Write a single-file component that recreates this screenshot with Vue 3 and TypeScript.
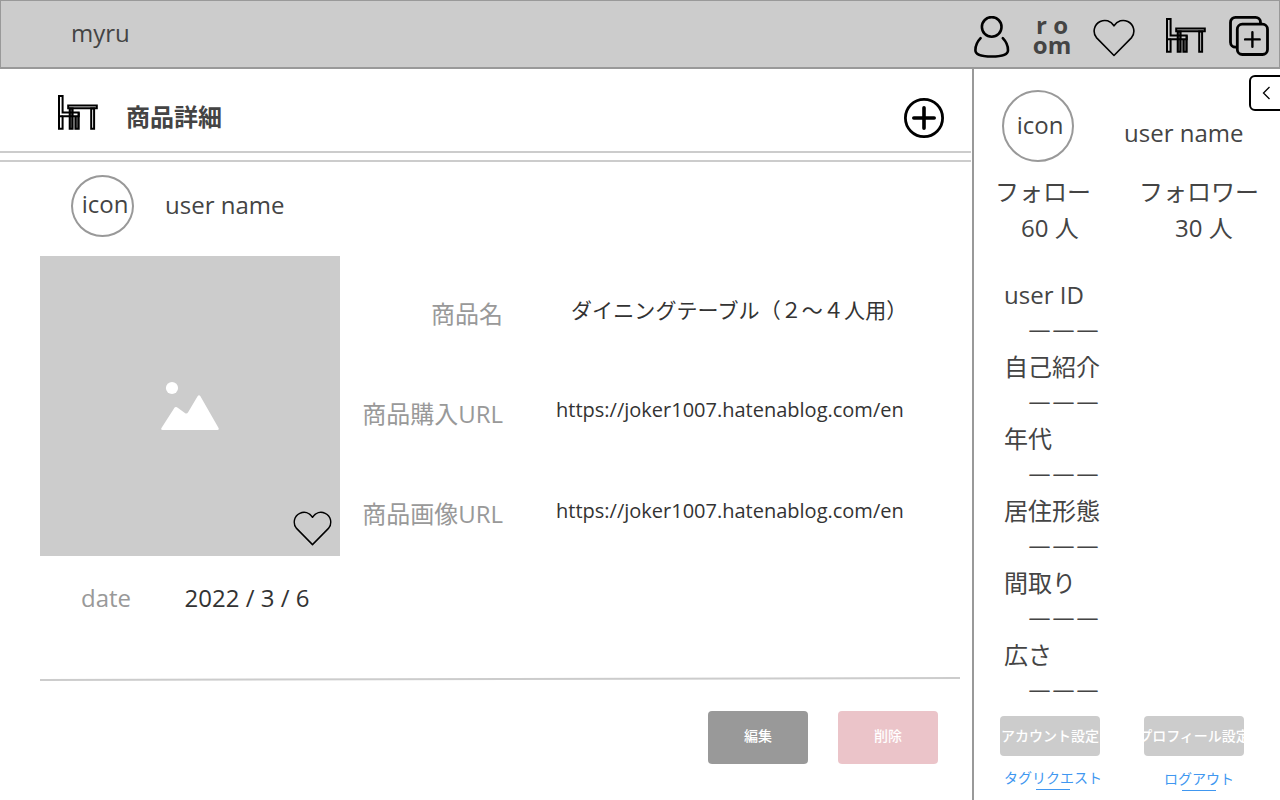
<script setup lang="ts">
interface Item { label: string; value: string; kind: string }

const items: Item[] = [
  { label: '商品名', value: 'ダイニングテーブル（２～４人用）', kind: 'name' },
  { label: '商品購入URL', value: 'https://joker1007.hatenablog.com/en', kind: 'shop' },
  { label: '商品画像URL', value: 'https://joker1007.hatenablog.com/en', kind: 'image' },
]

const profile: string[] = ['user ID', '自己紹介', '年代', '居住形態', '間取り', '広さ']
</script>

<template>
  <div class="page">
    <svg class="defs" width="0" height="0">
      <symbol id="desk" viewBox="0 0 42 36">
        <path d="M12.800 14.400h3.200v20.300h-3.200zM18.600 22h3v12.600h-3z" fill="#555" />
        <g fill="none" stroke="#000" stroke-width="2">
          <path d="M2 2h3.600v16.400h16.100v3.900H5.600v12.400H2z" />
          <path d="M2 22.300h3.600M21.700 18.400v16.300h-3.300V22.300" />
          <path d="M12.700 14.400h2.900v20.300h-2.900zM34.200 14.400h2.900v20.300h-2.900z" />
          <path d="M11.200 11.400h28.600v2.900H11.200z" />
        </g>
      </symbol>
      <symbol id="heart" viewBox="0 0 42 38">
        <path d="M21 6.800C17.600 1.500 12 .3 7.200 2.500 1.100 5.400-.8 13.200 3.400 18.600L21 36.500l17.600-17.900c4.200-5.400 2.300-13.200-3.800-16.100C30 .3 24.400 1.500 21 6.800z" fill="none" stroke="#000" stroke-width="1.600" stroke-linejoin="round" />
      </symbol>
    </svg>

    <header class="topbar">
      <span class="brand">myru</span>
      <nav class="nav">
        <svg class="ic-user" width="36" height="42" viewBox="0 0 36 42">
          <g fill="none" stroke="#000" stroke-width="2.600" stroke-linecap="round">
            <circle cx="17.700" cy="10.900" r="9.800" />
            <path d="M6.600 22.200C3.600 25.300 1.400 30 1.400 34.200c0 4.600 6.800 6.300 16.300 6.300S34 38.800 34 34.200c0-4.200-2.200-8.900-5.200-12" />
          </g>
        </svg>
        <span class="room">r o<br />om</span>
        <svg class="ic-heart" width="42" height="38"><use href="#heart" /></svg>
        <svg class="ic-desk" width="42" height="36"><use href="#desk" /></svg>
        <svg class="ic-add" width="40" height="40" viewBox="0 0 40 40">
          <g fill="none" stroke="#000" stroke-width="2.800" stroke-linecap="round">
            <path d="M7.500 31.200H6.500a5 5 0 0 1-5-5V6.400a5 5 0 0 1 5-5h20a5 5 0 0 1 5 5V7.500" />
            <rect x="8.300" y="8.200" width="30.200" height="30.300" rx="5" />
            <path d="M23.400 16.200v14.500M16.100 23.400h14.600" stroke-width="2.400" />
          </g>
        </svg>
      </nav>
    </header>

    <div class="body">
      <main class="main">
        <div class="heading">
          <svg class="heading-desk" width="42" height="36"><use href="#desk" /></svg>
          <h1>商品詳細</h1>
          <svg class="heading-add" width="40" height="40" viewBox="0 0 40 40">
            <circle cx="20" cy="20" r="18.600" fill="none" stroke="#000" stroke-width="2.800" />
            <path d="M20 9.800v20.400M9.800 20h20.400" stroke="#000" stroke-width="3.600" stroke-linecap="round" />
          </svg>
        </div>
        <div class="rules"></div>

        <div class="owner">
          <span class="avatar">icon</span>
          <span>user name</span>
        </div>

        <section class="detail">
          <div class="photo">
            <svg class="picture" width="60" height="50" viewBox="0 0 60 50">
              <circle cx="12" cy="8" r="6.100" fill="#fff" />
              <path d="M1.300 48.300L14 28.500q1.400-2.300 3.700-.8l7.200 5.200q1.900 1.300 3.200-.7L37.600 16.200q1.400-1.900 2.800 0L58.700 48.300q.6 1.700-1.200 1.700h-55q-2 0-1.200-1.700z" fill="#fff" />
            </svg>
            <svg class="photo-heart" width="39" height="35" viewBox="0 0 42 38"><use href="#heart" /></svg>
          </div>
          <dl class="items">
            <div v-for="item in items" :key="item.label" class="item">
              <dt>{{ item.label }}</dt>
              <dd :class="item.kind">{{ item.value }}</dd>
            </div>
          </dl>
        </section>

        <div class="date"><span class="date-label">date</span><span>2022 / 3 / 6</span></div>

        <svg class="divider" width="920" height="4" viewBox="0 0 920 4">
          <path d="M0 3L920 1" stroke="#ccc" stroke-width="2" />
        </svg>

        <div class="actions">
          <button class="btn edit">編集</button>
          <button class="btn delete">削除</button>
        </div>
      </main>

      <aside class="side">
        <button class="collapse" aria-label="collapse">
          <svg width="9" height="14" viewBox="0 0 9 14"><path d="M7.500 1L1.500 7l6 6" fill="none" stroke="#000" stroke-width="1.300" /></svg>
        </button>
        <div class="me">
          <span class="avatar big">icon</span>
          <span class="me-name">user name</span>
        </div>
        <div class="counts">
          <div class="count follow"><div>フォロー</div><div class="num">60 人</div></div>
          <div class="count follower"><div>フォロワー</div><div class="num">30 人</div></div>
        </div>
        <div class="profile">
          <template v-for="row in profile" :key="row">
            <div>{{ row }}</div>
            <div class="dash">———</div>
          </template>
        </div>
        <div class="side-buttons">
          <button class="btn small">アカウント設定</button>
          <button class="btn small">プロフィール設定</button>
        </div>
        <div class="links">
          <a class="link tag">タグリクエスト</a>
          <a class="link logout">ログアウト</a>
        </div>
      </aside>
    </div>
  </div>
</template>

<style>
body { margin: 0; background: #fff; }
</style>

<style scoped>
.page {
  width: 1280px; height: 800px; overflow: hidden;
  display: flex; flex-direction: column;
  font: 24px/36px "Open Sans", "Noto Sans CJK JP", sans-serif;
  color: #444;
}
.page * { box-sizing: border-box; }
.defs { position: absolute; }
svg { display: block; flex: none; }

.topbar {
  height: 69px; flex: none; background: #ccc;
  border: 1px solid #999; border-bottom-width: 2px;
  display: flex; justify-content: space-between; align-items: flex-start;
}
.brand { margin: 14px 0 0 70px; }
.nav { display: flex; align-items: flex-start; padding-right: 10px; }
.ic-user { margin-top: 15px; }
.room { width: 42px; margin: 14px 0 0 21px; text-align: center; font-weight: 700; line-height: 20px; }
.ic-heart { margin: 18px 0 0 20px; }
.ic-desk { margin: 16px 0 0 30px; }
.ic-add { margin: 15px 0 0 22px; }

.body { display: flex; flex: 1; min-height: 0; }
.main { width: 972px; flex: none; }

.heading { height: 82px; display: flex; align-items: flex-start; }
.heading-desk { margin: 25px 0 0 57px; }
h1 { margin: 30px 0 0 27px; font-size: 24px; line-height: 36px; font-weight: 700; }
.heading-add { margin: 29px 28px 0 auto; }
.rules { width: 971px; height: 11px; border: solid #ccc; border-width: 2px 0; }

.owner { display: flex; gap: 31px; margin: 13px 0 0 71px; line-height: 59px; height: 81px; }
.avatar {
  width: 63px; height: 62px; border: 2px solid #999; border-radius: 50%;
  line-height: 54px; text-align: center; padding-left: 5px;
}

.detail { display: flex; padding-left: 40px; height: 300px; }
.photo {
  width: 300px; height: 300px; background: #ccc; flex: none; position: relative;
  display: flex; justify-content: center; padding-top: 124px;
}
.photo-heart { position: absolute; right: 8.5px; bottom: 10px; }
.items { margin: 39px 0 0; }
.item { display: flex; height: 100px; }
.item:last-child { height: 60px; }
dt { width: 163px; text-align: right; color: #999; line-height: 38px; }
dd { margin: 0 0 0 53px; color: #333; font-size: 20px; line-height: 29px; white-space: nowrap; }
dd.name { margin-left: 68px; font-size: 21px; line-height: 31px; letter-spacing: 0.1px; }
dd.image { line-height: 31px; }

.date { display: flex; gap: 53.5px; margin: 24px 0 0 81px; color: #333; }
.date-label { color: #999; }
.divider { margin: 61px 0 0 40px; }

.actions { display: flex; gap: 30px; margin: 30px 0 0 708px; }
.btn {
  width: 100px; height: 53px; border: 0; border-radius: 4px; padding: 0 0 5px;
  color: #fff; font: 500 14px/20px "Noto Sans CJK JP", sans-serif;
  display: flex; justify-content: center; align-items: center;
  white-space: nowrap; overflow: hidden;
}
.edit { background: #999; }
.delete { background: #ebc4c9; }

.side { flex: 1; min-width: 0; border-left: 2px solid #999; position: relative; overflow: hidden; }
.collapse {
  position: absolute; left: 275px; top: 6px; width: 42px; height: 36px;
  background: #fff; border: 2px solid #000; border-radius: 6px;
  padding: 0 0 0 11px; display: flex; align-items: center;
}
.me { display: flex; padding: 21px 0 0 28px; }
.big { width: 72px; height: 72px; line-height: 65px; padding-left: 4px; }
.me-name { margin: 25px 0 0 50px; }
.counts { display: flex; padding: 12px 0 0 21px; }
.follow { width: 144px; }
.count .num { padding-left: 26px; }
.follower .num { padding-left: 36px; }
.profile { margin: 31px 0 0 30px; }
.dash { padding-left: 24.5px; height: 36px; line-height: 31px; font-size: 22px; font-weight: 500; letter-spacing: 2px; }
.side-buttons { display: flex; gap: 44px; margin: 7px 0 0 26px; }
.small { height: 40px; background: #ccc; padding-bottom: 2px; }
.links { display: flex; align-items: flex-start; margin: 11px 0 0 30px; }
.link {
  color: #4097f0; font: 14px/20px "Noto Sans CJK JP", sans-serif;
  display: flex; flex-direction: column; align-items: center;
}
.link::after { content: ""; width: 34px; height: 1px; background: currentColor; margin-top: 2px; }
.logout { margin: 1px 0 0 62px; }
</style>
